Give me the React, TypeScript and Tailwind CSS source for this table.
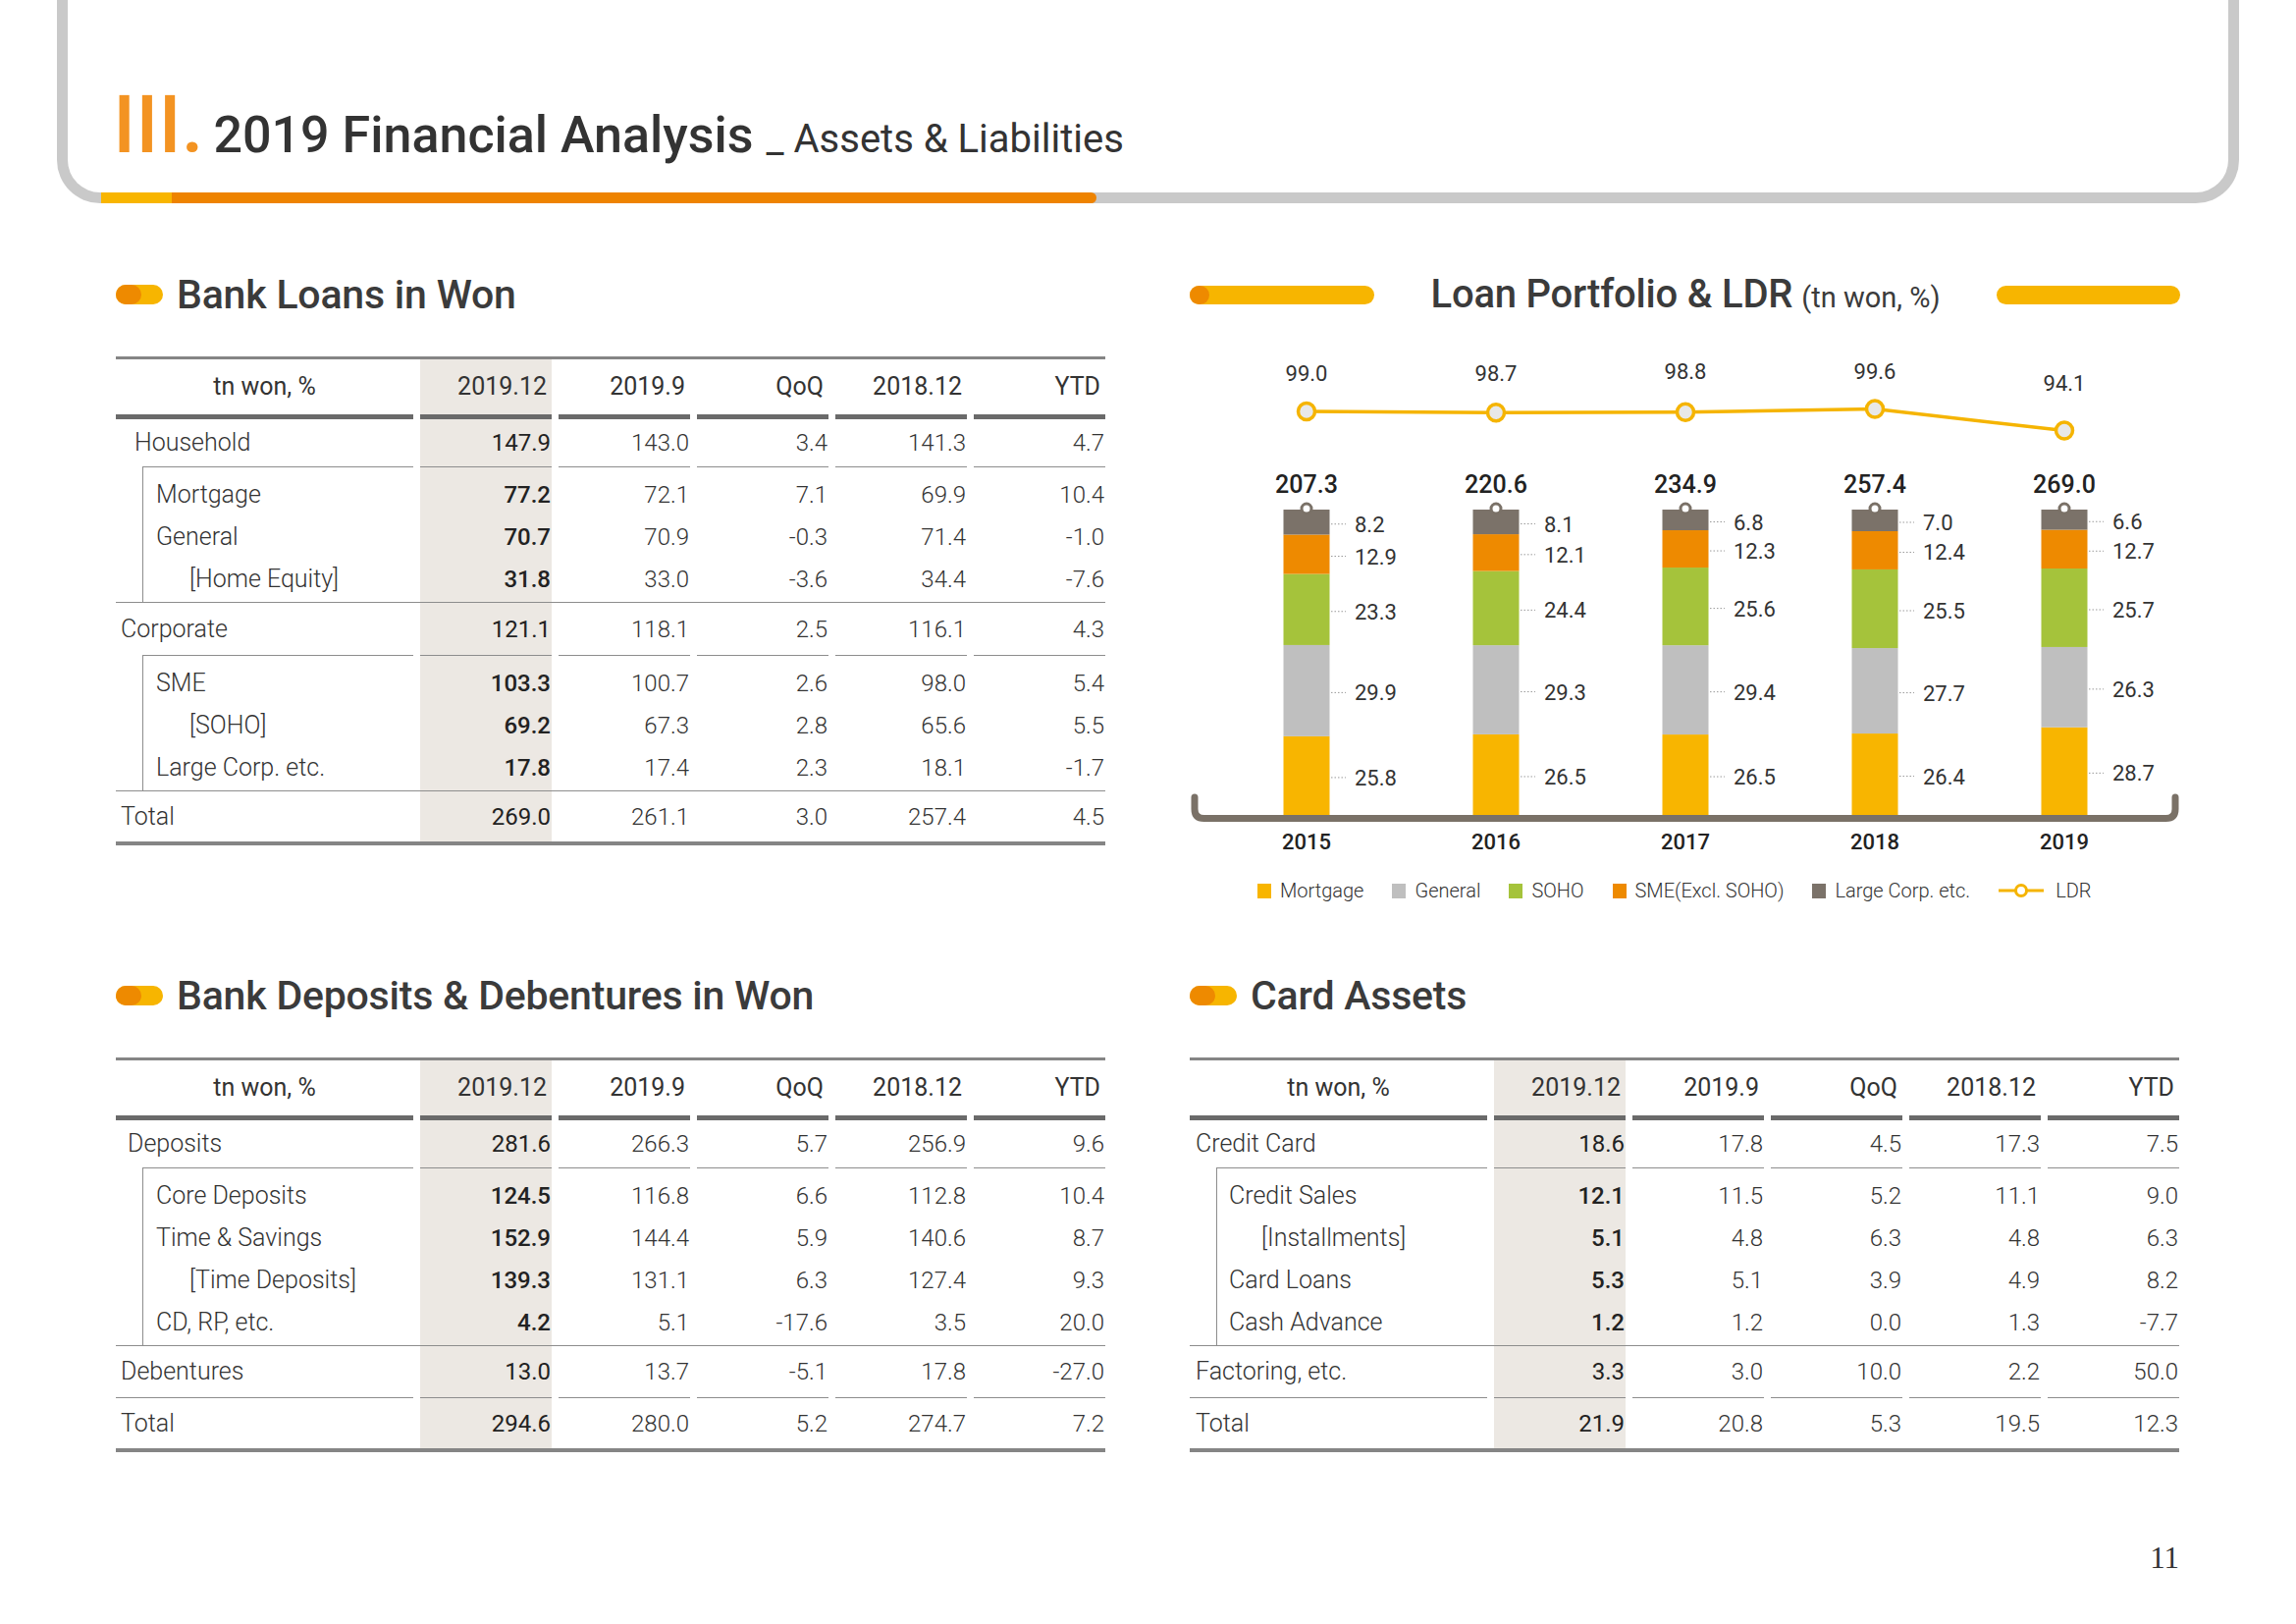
import React from "react";

type Line = { label: string; values: string[]; pad: string };
type Block = Line & { sub?: Line[] };

const HEAD = ["2019.12", "2019.9", "QoQ", "2018.12", "YTD"];
const GRID = "grid grid-cols-[303px_134px_134px_134px_134px_134px] gap-x-[7px]";
const SHADE = "bg-[#ece8e3]";

const LOANS: Block[] = [
  {
    label: "Household",
    values: ["147.9", "143.0", "3.4", "141.3", "4.7"],
    pad: "pl-[19px]",
    sub: [
      { label: "Mortgage", values: ["77.2", "72.1", "7.1", "69.9", "10.4"], pad: "pl-[13px]" },
      { label: "General", values: ["70.7", "70.9", "-0.3", "71.4", "-1.0"], pad: "pl-[13px]" },
      { label: "[Home Equity]", values: ["31.8", "33.0", "-3.6", "34.4", "-7.6"], pad: "pl-[47px]" },
    ],
  },
  {
    label: "Corporate",
    values: ["121.1", "118.1", "2.5", "116.1", "4.3"],
    pad: "pl-[5px]",
    sub: [
      { label: "SME", values: ["103.3", "100.7", "2.6", "98.0", "5.4"], pad: "pl-[13px]" },
      { label: "[SOHO]", values: ["69.2", "67.3", "2.8", "65.6", "5.5"], pad: "pl-[47px]" },
      { label: "Large Corp. etc.", values: ["17.8", "17.4", "2.3", "18.1", "-1.7"], pad: "pl-[13px]" },
    ],
  },
  { label: "Total", values: ["269.0", "261.1", "3.0", "257.4", "4.5"], pad: "pl-[5px]" },
];

const DEPOSITS: Block[] = [
  {
    label: "Deposits",
    values: ["281.6", "266.3", "5.7", "256.9", "9.6"],
    pad: "pl-[12px]",
    sub: [
      { label: "Core Deposits", values: ["124.5", "116.8", "6.6", "112.8", "10.4"], pad: "pl-[13px]" },
      { label: "Time & Savings", values: ["152.9", "144.4", "5.9", "140.6", "8.7"], pad: "pl-[13px]" },
      { label: "[Time Deposits]", values: ["139.3", "131.1", "6.3", "127.4", "9.3"], pad: "pl-[47px]" },
      { label: "CD, RP, etc.", values: ["4.2", "5.1", "-17.6", "3.5", "20.0"], pad: "pl-[13px]" },
    ],
  },
  { label: "Debentures", values: ["13.0", "13.7", "-5.1", "17.8", "-27.0"], pad: "pl-[5px]" },
  { label: "Total", values: ["294.6", "280.0", "5.2", "274.7", "7.2"], pad: "pl-[5px]" },
];

const CARDS: Block[] = [
  {
    label: "Credit Card",
    values: ["18.6", "17.8", "4.5", "17.3", "7.5"],
    pad: "pl-[6px]",
    sub: [
      { label: "Credit Sales", values: ["12.1", "11.5", "5.2", "11.1", "9.0"], pad: "pl-[12px]" },
      { label: "[Installments]", values: ["5.1", "4.8", "6.3", "4.8", "6.3"], pad: "pl-[45px]" },
      { label: "Card Loans", values: ["5.3", "5.1", "3.9", "4.9", "8.2"], pad: "pl-[12px]" },
      { label: "Cash Advance", values: ["1.2", "1.2", "0.0", "1.3", "-7.7"], pad: "pl-[12px]" },
    ],
  },
  { label: "Factoring, etc.", values: ["3.3", "3.0", "10.0", "2.2", "50.0"], pad: "pl-[6px]" },
  { label: "Total", values: ["21.9", "20.8", "5.3", "19.5", "12.3"], pad: "pl-[6px]" },
];

const YEARS = [
  { year: "2015", total: "207.3", ldr: 99.0, ly: 48, seg: [25.8, 29.9, 23.3, 12.9, 8.2] },
  { year: "2016", total: "220.6", ldr: 98.7, ly: 48, seg: [26.5, 29.3, 24.4, 12.1, 8.1] },
  { year: "2017", total: "234.9", ldr: 98.8, ly: 46, seg: [26.5, 29.4, 25.6, 12.3, 6.8] },
  { year: "2018", total: "257.4", ldr: 99.6, ly: 46, seg: [26.4, 27.7, 25.5, 12.4, 7.0] },
  { year: "2019", total: "269.0", ldr: 94.1, ly: 58, seg: [28.7, 26.3, 25.7, 12.7, 6.6] },
];
const SEG_COLORS = ["#f8b500", "#bfbfbf", "#a5c33b", "#ee8a00", "#7b7269"];
const CX = [119, 312, 505, 698, 891];

const LEGEND = [
  { t: "Mortgage", c: "bg-[#f8b500]" },
  { t: "General", c: "bg-[#bfbfbf]" },
  { t: "SOHO", c: "bg-[#a5c33b]" },
  { t: "SME(Excl. SOHO)", c: "bg-[#ee8a00]" },
  { t: "Large Corp. etc.", c: "bg-[#7b7269]" },
];

function Pill() {
  return (
    <div className="w-[48px] h-[20px] rounded-full bg-[#f7b500] flex shrink-0">
      <div className="w-[26px] h-[20px] rounded-full bg-[#ee8a00]" />
    </div>
  );
}

function Heading({ title }: { title: string }) {
  return (
    <div className="h-[40px] flex items-center gap-x-[14px]">
      <Pill />
      <span className="text-[41px] leading-none font-medium text-[#3b3b3b] tracking-[-0.2px]">{title}</span>
    </div>
  );
}

function DataTable({ blocks }: { blocks: Block[] }) {
  return (
    <div className="w-[1008px] border-t-[3px] border-b-[4px] border-[#858585] text-[#333]">
      <div className={GRID}>
        <div className="h-[61px] border-b-[5px] border-[#6a6a6a] flex items-center justify-center text-[25px]">tn won, %</div>
        {HEAD.map((h, i) => (
          <div key={h} className={`h-[61px] border-b-[5px] border-[#6a6a6a] flex items-center justify-end pr-[5px] text-[25px] ${i === 0 ? SHADE : ""}`}>
            {h}
          </div>
        ))}
      </div>
      {blocks.map((b, bi) => {
        const last = bi === blocks.length - 1;
        const h = last ? "h-[51px]" : b.sub ? (bi === 0 ? "h-[48px]" : "h-[53px]") : "h-[53px] border-b border-[#8d8d8d]";
        return (
          <React.Fragment key={b.label}>
            <div className={GRID}>
              <div className={`${h} flex items-center ${b.pad} text-[25px] font-light`}>{b.label}</div>
              {b.values.map((v, i) => (
                <div key={i} className={`${h} flex items-center justify-end pr-[1px] text-[24px] ${i === 0 ? `${SHADE} font-normal text-[#222]` : "font-light"}`}>
                  {v}
                </div>
              ))}
            </div>
            {b.sub && (
              <div className="border-b border-[#8d8d8d]">
                <div className={GRID}>
                  <div className="ml-[27px] border-l border-t border-[#8d8d8d] pt-[6px] pb-[2px]">
                    {b.sub.map((s) => (
                      <div key={s.label} className={`h-[43px] flex items-center ${s.pad} text-[25px] font-light`}>
                        {s.label}
                      </div>
                    ))}
                  </div>
                  {HEAD.map((_, i) => (
                    <div key={i} className={`border-t border-[#8d8d8d] pt-[6px] pb-[2px] ${i === 0 ? SHADE : ""}`}>
                      {b.sub!.map((s) => (
                        <div key={s.label} className={`h-[43px] flex items-center justify-end pr-[1px] text-[24px] ${i === 0 ? "font-medium text-[#222]" : "font-light"}`}>
                          {s.values[i]}
                        </div>
                      ))}
                    </div>
                  ))}
                </div>
              </div>
            )}
          </React.Fragment>
        );
      })}
    </div>
  );
}

function LoanChart() {
  const pts = YEARS.map((d, i) => `${CX[i]},${79 + (99 - d.ldr) * 4}`).join(" ");
  return (
    <svg width={1009} height={540} viewBox="0 0 1009 540" className="block">
      <path d="M5 472 V484 Q5 493.5 14.5 493.5 H994.5 Q1004 493.5 1004 484 V472" fill="none" stroke="#7a7167" strokeWidth={7} strokeLinecap="round" />
      {YEARS.map((d, i) => {
        const sum = d.seg.reduce((a, b) => a + b, 0);
        const cx = CX[i];
        let y = 490;
        return (
          <g key={d.year}>
            {d.seg.map((p, j) => {
              const hh = (p / sum) * 311;
              y -= hh;
              const mid = y + hh / 2;
              return (
                <g key={j}>
                  <rect x={cx - 23.5} y={y} width={47} height={hh} fill={SEG_COLORS[j]} />
                  <line x1={cx + 25} x2={cx + 40} y1={mid + 2} y2={mid + 2} stroke="#9a9a9a" strokeWidth={1} strokeDasharray="1.5 2" />
                  <text x={cx + 49} y={mid + 10} fontSize={22} fill="#333">
                    {p.toFixed(1)}
                  </text>
                </g>
              );
            })}
            <circle cx={cx} cy={178} r={5} fill="#fff" stroke="#7a7167" strokeWidth={3} />
            <text x={cx} y={162} textAnchor="middle" fontSize={25} fontWeight={500} fill="#222">
              {d.total}
            </text>
            <text x={cx} y={525} textAnchor="middle" fontSize={22} fontWeight={500} fill="#222">
              {d.year}
            </text>
          </g>
        );
      })}
      <polyline points={pts} fill="none" stroke="#f5b400" strokeWidth={3.5} />
      {YEARS.map((d, i) => (
        <g key={d.year}>
          <circle cx={CX[i]} cy={79 + (99 - d.ldr) * 4} r={8.5} fill="#e8e8e8" stroke="#f5b400" strokeWidth={3.5} />
          <text x={CX[i]} y={d.ly} textAnchor="middle" fontSize={22} fill="#333">
            {d.ldr.toFixed(1)}
          </text>
        </g>
      ))}
    </svg>
  );
}

export default function App() {
  return (
    <div className="w-[2339px] h-[1654px] bg-white overflow-hidden font-['Roboto',sans-serif] text-[#333]">
      {/* title frame */}
      <div className="relative ml-[58px] w-[2223px] h-[207px] border-x-[11px] border-b-[11px] border-[#c9c9c9] rounded-b-[44px]">
        <div className="flex items-baseline pt-[86px] pl-[46px] leading-none">
          <span className="text-[82px] font-medium text-[#f39322]">III.</span>
          <span className="ml-[10px] text-[52px] font-medium text-[#333]">2019 Financial Analysis</span>
          <span className="ml-[13px] text-[40px] text-[#333]">_ Assets &amp; Liabilities</span>
        </div>
        <div className="absolute left-[34px] -bottom-[11px] h-[11px] w-[1014px] flex">
          <div className="w-[72px] bg-[#f8b500]" />
          <div className="flex-1 bg-[#ee8300] rounded-r-full" />
        </div>
      </div>

      {/* row 1 */}
      <div className="mt-[73px] ml-[118px] grid grid-cols-[1008px_1009px] gap-x-[86px]">
        <div>
          <Heading title="Bank Loans in Won" />
          <div className="mt-[43px]">
            <DataTable blocks={LOANS} />
          </div>
        </div>
        <div>
          <div className="h-[40px] flex items-center justify-between">
            <div className="w-[188px] h-[19px] rounded-full bg-[#f7b500] flex">
              <div className="w-[20px] h-[19px] rounded-full bg-[#ee8a00]" />
            </div>
            <div className="flex items-baseline leading-none text-[#3b3b3b]">
              <span className="text-[40px] font-medium tracking-[-0.2px]">Loan Portfolio &amp; LDR</span>
              <span className="ml-[9px] text-[29px]">(tn won, %)</span>
            </div>
            <div className="w-[187px] h-[19px] rounded-full bg-[#f7b500]" />
          </div>
          <div className="mt-[20px]">
            <LoanChart />
          </div>
          <div className="mt-[15px] h-[24px] flex items-center pl-[69px] gap-x-[29px] text-[20px] font-light text-[#333]">
            {LEGEND.map((l) => (
              <div key={l.t} className="flex items-center gap-x-[9px]">
                <span className={`w-[14px] h-[15px] ${l.c}`} />
                {l.t}
              </div>
            ))}
            <div className="flex items-center gap-x-[12px]">
              <svg width={46} height={16} viewBox="0 0 46 16">
                <line x1={0} x2={46} y1={8} y2={8} stroke="#f5b400" strokeWidth={3} />
                <circle cx={23} cy={8} r={5.5} fill="#fff" stroke="#f5b400" strokeWidth={3} />
              </svg>
              LDR
            </div>
          </div>
        </div>
      </div>

      {/* row 2 */}
      <div className="mt-[75px] ml-[118px] grid grid-cols-[1008px_1009px] gap-x-[86px]">
        <div>
          <Heading title="Bank Deposits & Debentures in Won" />
          <div className="mt-[43px]">
            <DataTable blocks={DEPOSITS} />
          </div>
        </div>
        <div>
          <Heading title="Card Assets" />
          <div className="mt-[43px]">
            <DataTable blocks={CARDS} />
          </div>
        </div>
      </div>

      <div className="mt-[92px] flex justify-end pr-[119px]">
        <span className="text-[31px] leading-none font-['Liberation_Serif',serif] text-[#333]">11</span>
      </div>
    </div>
  );
}
